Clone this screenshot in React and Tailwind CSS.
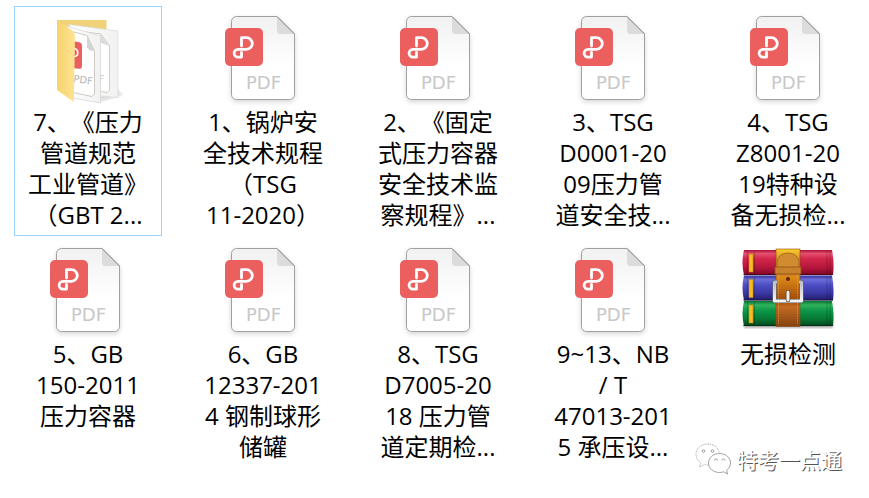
import clsx from 'clsx';

const FILES = [
  { type: 'folder', lines: ['7、《压力', '管道规范', '工业管道》', '（GBT 2...'], selected: true },
  { type: 'pdf', lines: ['1、锅炉安', '全技术规程', '（TSG', '11-2020）'] },
  { type: 'pdf', lines: ['2、《固定', '式压力容器', '安全技术监', '察规程》...'] },
  { type: 'pdf', lines: ['3、TSG', 'D0001-20', '09压力管', '道安全技...'] },
  { type: 'pdf', lines: ['4、TSG', 'Z8001-20', '19特种设', '备无损检...'] },
  { type: 'pdf', lines: ['5、GB', '150-2011', '压力容器'] },
  { type: 'pdf', lines: ['6、GB', '12337-201', '4 钢制球形', '储罐'] },
  { type: 'pdf', lines: ['8、TSG', 'D7005-20', '18 压力管', '道定期检...'] },
  { type: 'pdf', lines: ['9~13、NB', '/ T', '47013-201', '5 承压设...'] },
  { type: 'rar', lines: ['无损检测'] },
];

function PdfIcon() {
  return (
    <svg viewBox="-2 2 100 99" className="h-[99px] w-[100px]" aria-hidden="true">
      <defs>
        <linearGradient id="pdf-page" x1="0" y1="0" x2="0" y2="1">
          <stop offset="0" stopColor="#f1f1f1" />
          <stop offset="0.6" stopColor="#ffffff" />
        </linearGradient>
        <filter id="pdf-shadow" x="-20%" y="-20%" width="140%" height="140%">
          <feDropShadow dx="0" dy="2" stdDeviation="2.5" floodColor="#000" floodOpacity="0.16" />
        </filter>
      </defs>
      <path
        d="M21.5 11.5H62L79.5 29V89.5a5 5 0 0 1-5 5H21.5a5 5 0 0 1-5-5V16.5a5 5 0 0 1 5-5z"
        fill="url(#pdf-page)"
        stroke="#a0a0a0"
        filter="url(#pdf-shadow)"
      />
      <path d="M62 12L79 29H65.5a3.5 3.5 0 0 1-3.5-3.5z" fill="#dcdcdc" />
      <path d="M62 11.5L79.5 29" stroke="#8e8e8e" />
      <rect x="10" y="23" width="38" height="38" rx="5" fill="#eb5f5f" />
      <path
        d="M26.5 41V32.7H31.5a5.8 5.8 0 0 1 0 11.6H23a3.9 3.9 0 0 0 0 7.8H26.5V47.5"
        fill="none"
        stroke="#fff"
        strokeWidth="2.8"
        strokeLinecap="round"
        strokeLinejoin="round"
      />
      <text x="48.5" y="84" textAnchor="middle" fill="#c8c8c8" className="font-['DejaVu_Sans',sans-serif] text-[18px]">
        PDF
      </text>
    </svg>
  );
}

function FolderIcon() {
  return (
    <svg viewBox="38 7 100 99" className="h-[99px] w-[100px]" aria-hidden="true">
      <defs>
        <linearGradient id="folder-front" x1="0" y1="0" x2="1" y2="0">
          <stop offset="0" stopColor="#f6d36f" />
          <stop offset="1" stopColor="#ffe394" />
        </linearGradient>
        <linearGradient id="folder-sheet" x1="0" y1="0" x2="1" y2="0">
          <stop offset="0" stopColor="#ffffff" />
          <stop offset="1" stopColor="#f1f1f1" />
        </linearGradient>
        <filter id="folder-blur">
          <feGaussianBlur stdDeviation="1.2" />
        </filter>
      </defs>
      <path d="M74 97L100 102L123 95L118 90L74 92z" fill="#000" opacity="0.12" filter="url(#folder-blur)" />
      <path d="M57 20H106.5V90H57z" fill="#f0d27a" />
      {/* back sheet */}
      <path d="M69 24.5L118 31V97.5L100 96z" fill="url(#folder-sheet)" stroke="#dadada" strokeWidth="0.7" />
      <path d="M86 32L101 34L109.5 46V90L107 92.5L98 91z" fill="#fff" stroke="#c9c3ae" strokeWidth="0.8" />
      <path d="M100 33.5L109.5 46L101 43z" fill="#dcdcdc" />
      <text x="99" y="82" fill="#c4c4c4" className="font-['DejaVu_Sans',sans-serif] text-[9px]">F</text>
      {/* front sheet */}
      <path d="M67 26L100.5 36V103L73 98z" fill="url(#folder-sheet)" stroke="#d6d6d6" strokeWidth="0.7" />
      <path d="M70 31L87 35.5L94.5 51V94L92 96.5L73 92.5z" fill="#fff" stroke="#bfbcb2" strokeWidth="0.8" />
      <path d="M87 35.5L94.5 51L90 50.5L87 47.5z" fill="#d4d4d4" />
      <path d="M72 41L79.5 42.2Q82 43 82 45.5V66Q82 69 79 68.8L72 68z" fill="#eb5f5f" />
      <path d="M74 48.5C79 49 79 57 74 56.5" fill="none" stroke="#fff" strokeWidth="1.6" />
      <text x="73" y="82" transform="rotate(8 73 82)" fill="#b4b4b4" className="font-['DejaVu_Sans',sans-serif] text-[10px]">
        PDF
      </text>
      <path d="M57 20L71 29.5Q75 32.5 75 36L73.8 102L57 90z" fill="url(#folder-front)" />
    </svg>
  );
}

function Book({ y, fill }) {
  return (
    <g>
      <path d={`M14 ${y}H102Q104.5 ${y + 12.5} 103 ${y + 25}H14Q11 ${y + 12.5} 14 ${y}z`} fill={fill} />
      <path d={`M13 ${y + 24.6}H103`} stroke="#000" strokeOpacity="0.45" />
      <path
        d={`M17.5 ${y + 1}V${y + 24}M24.5 ${y + 1}V${y + 24}M97 ${y + 1}V${y + 24}M100 ${y + 1}V${y + 24}`}
        stroke="#000"
        strokeOpacity="0.2"
      />
      <rect x="19" y={y + 4} width="4" height="18" fill="#f5bd24" stroke="#c17c10" strokeWidth="0.5" />
    </g>
  );
}

function RarIcon() {
  return (
    <svg viewBox="8 -1 100 99" className="h-[99px] w-[100px]" aria-hidden="true">
      <defs>
        <linearGradient id="book-red" x1="0" y1="0" x2="0" y2="1">
          <stop offset="0" stopColor="#a90f35" />
          <stop offset="0.14" stopColor="#e5506e" />
          <stop offset="0.35" stopColor="#d3264c" />
          <stop offset="0.7" stopColor="#b5163b" />
          <stop offset="1" stopColor="#7e0625" />
        </linearGradient>
        <linearGradient id="book-blue" x1="0" y1="0" x2="0" y2="1">
          <stop offset="0" stopColor="#30329a" />
          <stop offset="0.16" stopColor="#6c6cd8" />
          <stop offset="0.4" stopColor="#4b4bc2" />
          <stop offset="0.7" stopColor="#3a38a4" />
          <stop offset="1" stopColor="#211d69" />
        </linearGradient>
        <linearGradient id="book-green" x1="0" y1="0" x2="0" y2="1">
          <stop offset="0" stopColor="#087332" />
          <stop offset="0.16" stopColor="#30b35c" />
          <stop offset="0.4" stopColor="#0b9547" />
          <stop offset="0.7" stopColor="#077a36" />
          <stop offset="1" stopColor="#03491d" />
        </linearGradient>
        <linearGradient id="belt" x1="0" y1="0" x2="0" y2="1">
          <stop offset="0" stopColor="#fbd02c" />
          <stop offset="0.1" stopColor="#dd9a26" />
          <stop offset="0.33" stopColor="#c9802a" />
          <stop offset="0.36" stopColor="#de8a18" />
          <stop offset="0.65" stopColor="#a04b08" />
          <stop offset="0.75" stopColor="#c06a22" />
          <stop offset="1" stopColor="#85420f" />
        </linearGradient>
        <linearGradient id="buckle" x1="0" y1="0" x2="0" y2="1">
          <stop offset="0" stopColor="#b9bfc8" />
          <stop offset="1" stopColor="#f4f4f4" />
        </linearGradient>
        <filter id="rar-blur">
          <feGaussianBlur stdDeviation="1" />
        </filter>
      </defs>
      <rect x="14" y="84" width="89" height="4" fill="#000" opacity="0.3" filter="url(#rar-blur)" />
      <Book y={10} fill="url(#book-red)" />
      <Book y={35.5} fill="url(#book-blue)" />
      <Book y={61} fill="url(#book-green)" />
      <rect x="46" y="9" width="24" height="77.5" fill="url(#belt)" stroke="#8a4a0c" strokeWidth="0.6" />
      <path d="M48.5 10V85M67.5 10V85" stroke="#f3c16b" strokeOpacity="0.6" strokeWidth="0.7" strokeDasharray="1.5 1" />
      <path d="M47 27V22A11 9 0 0 1 69 22V27" fill="#d18c2f" stroke="#9c6417" strokeWidth="0.8" />
      <path d="M45 27H71V34H45z" fill="#c7822b" stroke="#8c4f12" strokeWidth="0.8" />
      <circle cx="58" cy="39" r="2" fill="#5b2905" />
      <path d="M47 42H44.5V61H71.5V42H69" fill="none" stroke="#4d5663" strokeWidth="4.2" strokeLinejoin="round" />
      <path d="M47 42H44.5V61H71.5V42H69" fill="none" stroke="url(#buckle)" strokeWidth="3.2" strokeLinejoin="round" />
      <path d="M58 52V60" stroke="#6b4524" strokeWidth="4.5" strokeLinecap="round" />
      <path d="M58 52V60" stroke="#eeeeee" strokeWidth="3" strokeLinecap="round" />
    </svg>
  );
}

const ICONS = { folder: FolderIcon, pdf: PdfIcon, rar: RarIcon };

function FileItem({ file }) {
  const Icon = ICONS[file.type];

  return (
    <button
      type="button"
      aria-pressed={Boolean(file.selected)}
      className={clsx(
        'flex h-full w-full flex-col items-center border pb-[5px]',
        file.selected ? 'border-[#99d1ff]' : 'border-transparent'
      )}
    >
      <Icon />
      <span className="min-h-[124px] text-2xl leading-[31px] whitespace-nowrap text-black">
        {file.lines.map((line) => (
          <span key={line} className="block">{line}</span>
        ))}
      </span>
    </button>
  );
}

function Watermark() {
  return (
    <div className="absolute right-[27px] bottom-[21px] flex items-center gap-[6px]">
      <svg
        viewBox="0 0 36 34"
        className="h-[34px] w-9"
        fill="#fff"
        stroke="#8b8b8b"
        strokeWidth="0.8"
        aria-hidden="true"
      >
        <path
          d="M12.5 1C6 1 1 5.5 1 11.5c0 3.5 1.8 6.500 4.800 8.400L4.500 24l5-2.400c1 .2 2 .4 3 .4 7 0 12-4.500 12-10.500S19.500 1 12.500 1z"
          strokeDasharray="1 1"
        />
        <path d="M24.5 10.5c-6 0-11 4-11 9.500s5 9.500 11 9.500c1.500 0 2.900-.2 4.200-.7l4 2.200-1.100-3.800c2.500-1.800 3.900-4.300 3.900-7.200 0-5.500-5-9.500-11-9.500z" />
        <circle cx="8.5" cy="8" r="1.3" />
        <circle cx="17.5" cy="8" r="1.3" />
        <path d="M19.5 17.5a1.5 1.5 0 0 1 3 0M27 17.5a1.5 1.5 0 0 1 3 0" fill="none" />
      </svg>
      <span className="text-[21px] leading-8 text-white [text-shadow:1px_1px_0_#555]">特考一点通</span>
    </div>
  );
}

export default function App() {
  return (
    <main className="relative min-h-screen bg-white pt-[6px] pr-[7px] pl-[14px] font-['Open_Sans','Noto_Sans_CJK_SC',sans-serif] [text-spacing-trim:space-all]">
      <ul className="grid grid-cols-5 gap-x-[27px] gap-y-[2px]">
        {FILES.map((file) => (
          <li key={file.lines.join('')}>
            <FileItem file={file} />
          </li>
        ))}
      </ul>
      <Watermark />
    </main>
  );
}
